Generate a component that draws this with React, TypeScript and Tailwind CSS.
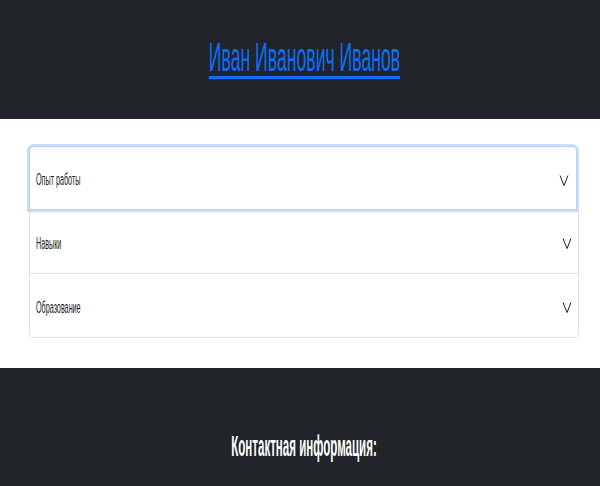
import { useState } from 'react';

const items = ['Опыт работы', 'Навыки', 'Образование'];

function Chevron() {
  return (
    <svg width="10" height="13" viewBox="0 0 10 13" fill="none" className="shrink-0">
      <path d="M1 1.5 L5 11.5 L9 1.5" stroke="#212529" strokeWidth="1" strokeLinejoin="miter" />
    </svg>
  );
}

export default function App() {
  const [focused] = useState(0);

  return (
    <div className="w-[600px] h-[486px] overflow-hidden bg-white font-['Liberation_Sans',Arial,sans-serif] text-[#212529]">
      {/* Header */}
      <header className="h-[119px] bg-[#212529] flex items-start justify-center pl-[8px] pt-[37px]">
        <a
          href="#"
          className="inline-block whitespace-nowrap text-[41px] leading-none font-medium text-[#0d6efd] underline decoration-[3px] underline-offset-[5px] scale-x-[0.43]"
        >
          Иван Иванович Иванов
        </a>
      </header>

      {/* Accordion */}
      <section className="h-[249px] pt-[27px] pl-[29px] pr-[21px]">
        <div className="border border-[#dee2e6] rounded-[5px]">
          {items.map((label, i) => (
            <button
              key={label}
              className={
                i === focused
                  ? 'relative z-10 w-full h-[64px] flex items-center justify-between pl-[6px] pr-[7px] pt-[4px] border border-[#b7cff5] -m-px w-[calc(100%+2px)] rounded-t-[5px] shadow-[0_0_0_2px_#c9dcf8]'
                  : 'w-full h-[64px] flex items-center justify-between pl-[6px] pr-[6px] pt-[4px] border-t border-[#dee2e6]'
              }
            >
              <span className="inline-block origin-left scale-x-[0.45] whitespace-nowrap text-[16px] font-light">
                {label}
              </span>
              <Chevron />
            </button>
          ))}
        </div>
      </section>

      {/* Footer */}
      <footer className="h-[118px] bg-[#212529] flex items-start justify-center pl-[8px] pt-[63px]">
        <h2 className="inline-block whitespace-nowrap text-[30px] leading-none font-bold text-white scale-x-[0.385]">
          Контактная информация:
        </h2>
      </footer>
    </div>
  );
}
